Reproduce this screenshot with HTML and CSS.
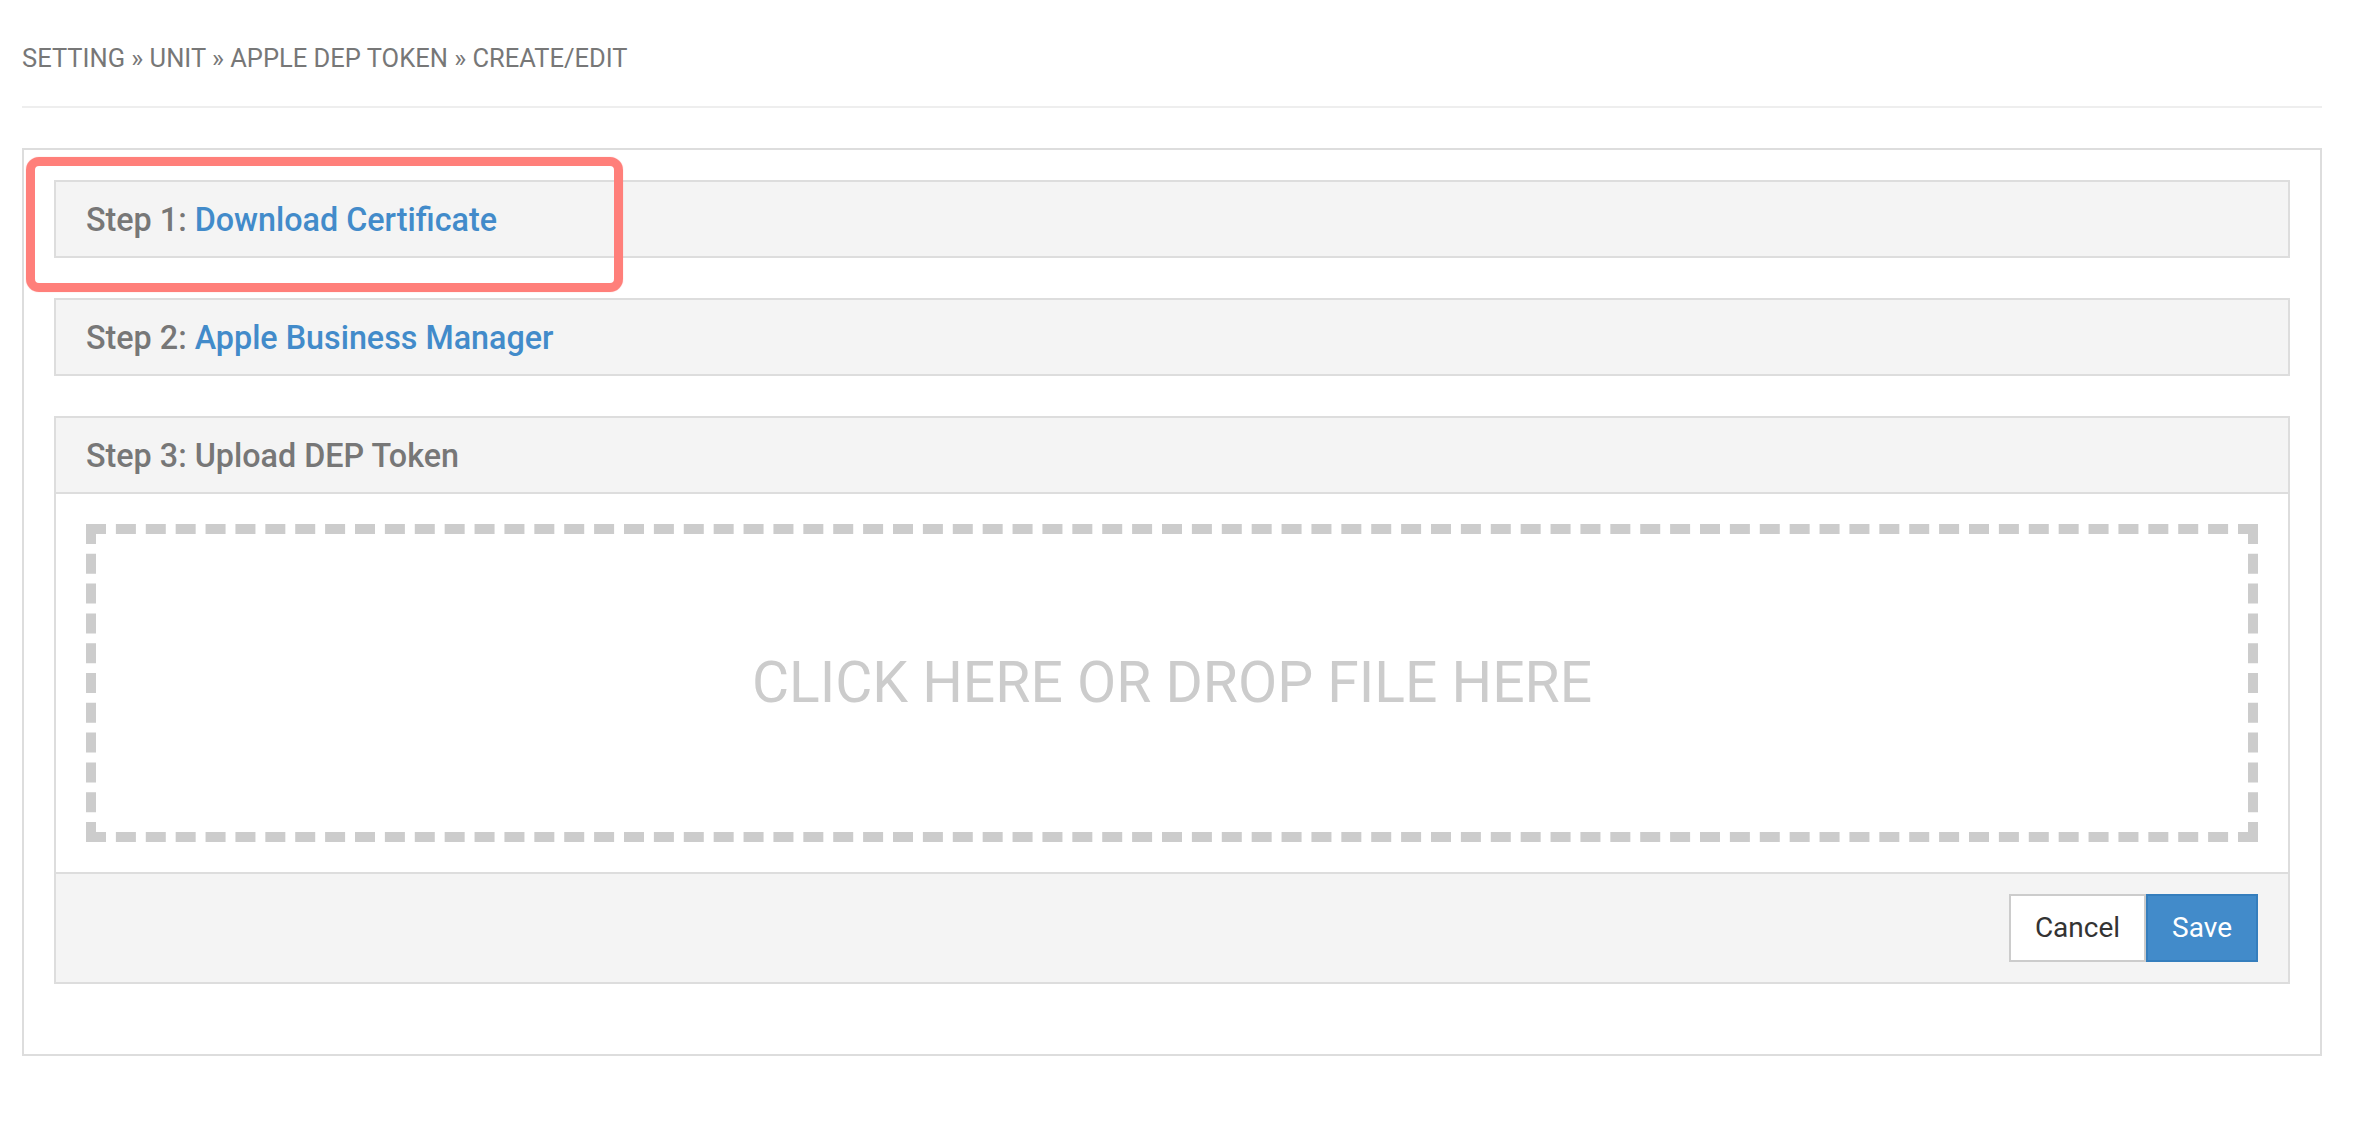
FILE: index.html
```html
<!DOCTYPE html>
<html lang="en">
<head>
<meta charset="utf-8">
<title>Apple DEP Token</title>
<link rel="stylesheet" href="styles.css">
</head>
<body>
<div class="page">
  <div class="breadcrumb">SETTING » UNIT » APPLE DEP TOKEN » CREATE/EDIT</div>
  <div class="divider"></div>
  <div class="card">
    <div class="panel">
      <div class="panel-heading">Step 1: <a class="step-link" href="#">Download Certificate</a></div>
    </div>
    <div class="panel">
      <div class="panel-heading">Step 2: <a class="step-link" href="#">Apple Business Manager</a></div>
    </div>
    <div class="panel">
      <div class="panel-heading has-body">Step 3: Upload DEP Token</div>
      <div class="panel-body">
        <div class="dropzone">CLICK HERE OR DROP FILE HERE</div>
      </div>
      <div class="panel-footer">
        <div class="btn-group">
          <button class="btn btn-default" type="button">Cancel</button>
          <button class="btn btn-primary" type="button">Save</button>
        </div>
      </div>
    </div>
    <div class="highlight"></div>
  </div>
</div>
</body>
</html>
```
FILE: styles.css
```css
* { box-sizing: border-box; }
html, body { margin: 0; padding: 0; background: #fff; }
body {
  font-family: Roboto, "Liberation Sans", Arial, sans-serif;
  color: #333;
}
.page {
  padding: 41px 36px 0 22px;
}
.breadcrumb {
  font-size: 25.5px;
  line-height: 35px;
  color: #777;
}
.divider {
  margin-top: 30px;
  height: 2px;
  background: #eee;
}
.card {
  position: relative;
  margin-top: 40px;
  border: 2px solid #ddd;
  padding: 30px;
}
.panel {
  border: 2px solid #ddd;
  background: #fff;
  margin-bottom: 40px;
}
.panel-heading {
  background: #f4f4f4;
  padding: 21px 30px 19px;
  font-size: 32.3px;
  line-height: 34px;
  font-weight: 500;
  color: #777;
}
.panel-heading.has-body {
  border-bottom: 2px solid #ddd;
}
.step-link {
  color: #428bca;
  text-decoration: none;
}
.panel-body {
  padding: 30px;
}
.dropzone {
  height: 318px;
  border: 10px dashed #ccc;
  display: flex;
  align-items: center;
  justify-content: center;
  font-size: 57px;
  color: #ccc;
  padding-bottom: 2px;
}
.panel-footer {
  background: #f4f4f4;
  border-top: 2px solid #ddd;
  padding: 20px 30px;
  display: flex;
  justify-content: flex-end;
}
.btn-group {
  display: flex;
}
.btn {
  font-family: Roboto, "Liberation Sans", Arial, sans-serif;
  font-size: 28px;
  line-height: 40px;
  padding: 12px 24px;
  border: 2px solid #ccc;
  margin: 0;
  border-radius: 0;
  cursor: pointer;
}
.btn-default {
  background: #fff;
  color: #333;
}
.btn-primary {
  background: #428bca;
  border-color: #357ebd;
  color: #fff;
}
.highlight {
  position: absolute;
  left: 2px;
  top: 7px;
  width: 597px;
  height: 135px;
  border: 9px solid #ff7f7a;
  border-radius: 13px;
  box-shadow: 0 0 1px rgba(255, 127, 122, 0.7);
  pointer-events: none;
}
```
